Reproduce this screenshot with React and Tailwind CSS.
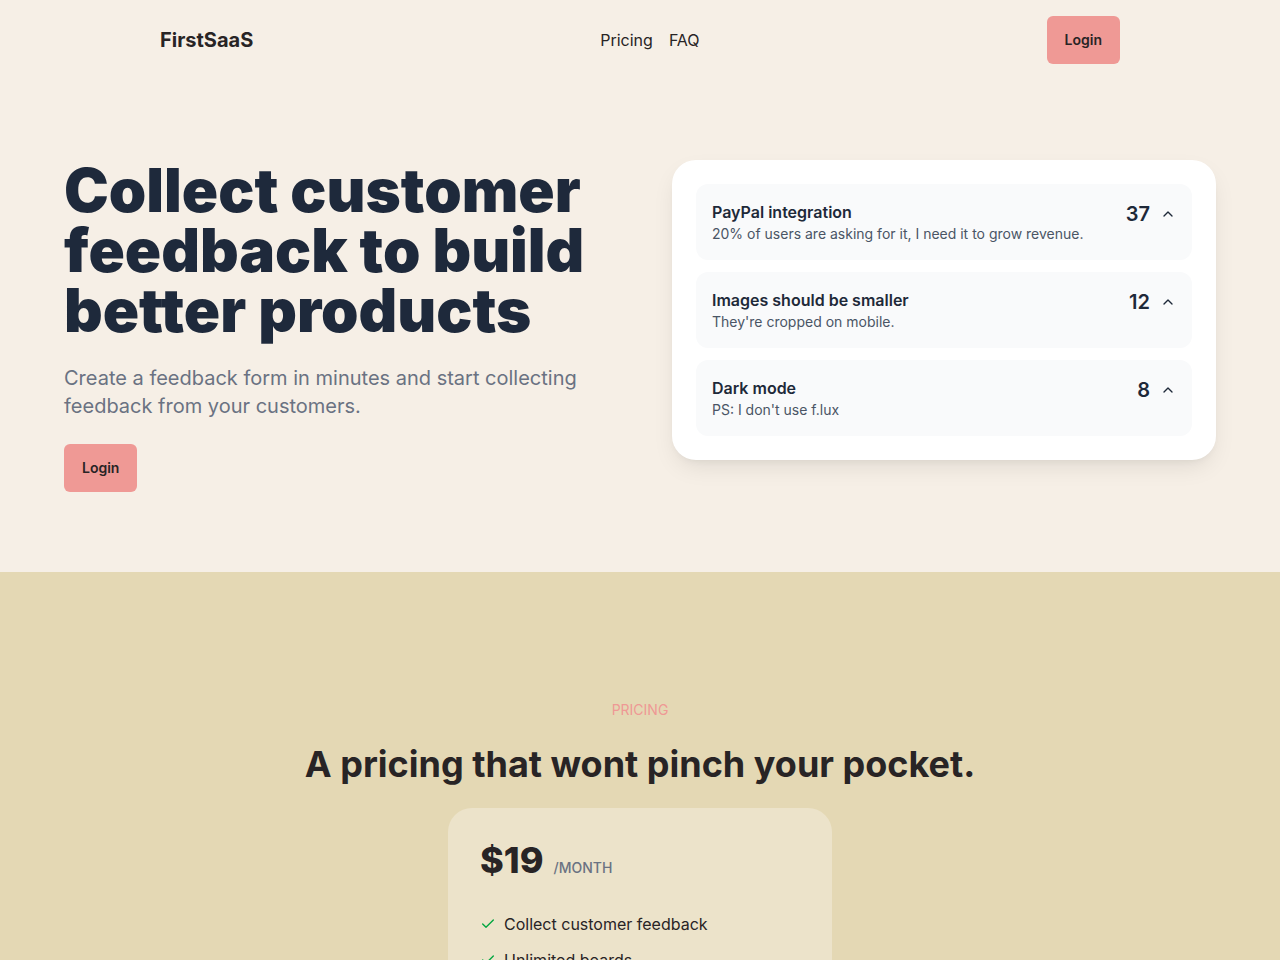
import { Check, ChevronUp } from 'lucide-react';

const requests = [
  { title: 'PayPal integration', text: '20% of users are asking for it, I need it to grow revenue.', votes: 37 },
  { title: 'Images should be smaller', text: "They're cropped on mobile.", votes: 12 },
  { title: 'Dark mode', text: "PS: I don't use f.lux", votes: 8 },
];

const features = ['Collect customer feedback', 'Unlimited boards', 'Admin dashboard', '24/7 support'];

export default function App() {
  return (
    <div className="min-h-screen bg-[#f6efe6] text-[#282425] font-['Inter',sans-serif]">
      <header className="max-w-5xl mx-auto px-8 py-4 flex items-center justify-between">
        <span className="text-xl font-bold">FirstSaaS</span>
        <nav className="flex items-center gap-4 text-base">
          <a href="#pricing">Pricing</a>
          <a href="#faq">FAQ</a>
        </nav>
        <button className="h-12 px-[18px] rounded-md bg-[#ef9995] text-sm font-semibold">Login</button>
      </header>

      <section className="max-w-6xl mx-auto py-20 grid grid-cols-2 gap-16 items-start">
        <div>
          <h1 className="text-6xl leading-[60px] font-black text-[#1e293b]">
            Collect customer feedback to build better products
          </h1>
          <p className="mt-6 text-xl text-gray-500">
            Create a feedback form in minutes and start collecting feedback from your customers.
          </p>
          <button className="mt-6 h-12 px-[18px] rounded-md bg-[#ef9995] text-sm font-semibold">Login</button>
        </div>

        <div className="bg-white rounded-3xl p-6 flex flex-col gap-3 shadow-[0_10px_25px_-5px_rgba(0,0,0,0.1),0_4px_10px_-6px_rgba(0,0,0,0.1)]">
          {requests.map((r) => (
            <div key={r.title} className="bg-gray-50 rounded-xl p-4 flex items-start justify-between">
              <div>
                <p className="font-semibold text-gray-800">{r.title}</p>
                <p className="text-sm text-gray-600">{r.text}</p>
              </div>
              <div className="flex items-center gap-2.5">
                <span className="text-xl font-semibold text-gray-800">{r.votes}</span>
                <ChevronUp className="w-4 h-4 text-gray-800" strokeWidth={2} />
              </div>
            </div>
          ))}
        </div>
      </section>

      <section id="pricing" className="bg-[#e4d8b4] py-32 flex flex-col items-center">
        <p className="text-sm text-[#ef9995]">PRICING</p>
        <h2 className="mt-6 text-4xl font-bold">A pricing that wont pinch your pocket.</h2>
        <div className="mt-6 w-96 bg-[#ece3ca] rounded-3xl p-8">
          <div className="flex items-end gap-2.5">
            <span className="text-4xl font-extrabold">$19</span>
            <span className="pb-0.5 text-sm font-medium text-gray-500 uppercase">/month</span>
          </div>
          <ul className="mt-8 flex flex-col gap-3">
            {features.map((f) => (
              <li key={f} className="flex items-center gap-2 text-base">
                <Check className="w-4 h-4 text-green-600" strokeWidth={2} />
                <span>{f}</span>
              </li>
            ))}
          </ul>
        </div>
      </section>
    </div>
  );
}
